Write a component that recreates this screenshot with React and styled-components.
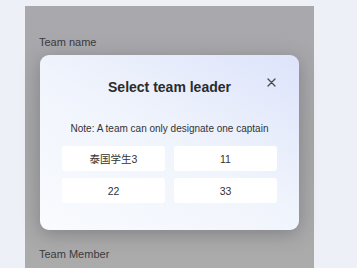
import React from "react"
import styled, { createGlobalStyle } from "styled-components"

const GlobalStyle = createGlobalStyle`
  html, body {
    margin: 0;
    padding: 0;
    height: 100%;
    background: #edf0f7;
    font-family: "Liberation Sans", Arial, "Noto Sans CJK SC", sans-serif;
  }
  #root {
    height: 100%;
  }
`

const members = ["泰国学生3", "11", "22", "33"]

export default function App() {
    return (
        <>
            <GlobalStyle />
            <Page>
                <Panel>
                    <Label>Team name</Label>
                    <Spacer />
                    <Label>Team Member</Label>
                    <Modal>
                        <Close aria-label="close">
                            <svg width="9" height="9" viewBox="0 0 9 9">
                                <path d="M1 1L8 8M8 1L1 8" stroke="#4a4a4a" strokeWidth="1.3" strokeLinecap="round" />
                            </svg>
                        </Close>
                        <Title>Select team leader</Title>
                        <Note>Note: A team can only designate one captain</Note>
                        <Grid>
                            {members.map((m) => (
                                <Member key={m}>{m}</Member>
                            ))}
                        </Grid>
                    </Modal>
                </Panel>
            </Page>
        </>
    )
}

const Page = styled.div`
    height: 100%;
    box-sizing: border-box;
    padding: 6px 0 0 25px;
`

const Panel = styled.div`
    position: relative;
    width: 289px;
    height: 100%;
    box-sizing: border-box;
    padding: 30px 0 0 14px;
    display: flex;
    flex-direction: column;
    background: linear-gradient(180deg, #a9a8ad 0%, #a6a6a8 50%, #ababab 100%);
`

const Label = styled.div`
    font-size: 11px;
    line-height: 13px;
    color: #3a3a3e;
`

const Spacer = styled.div`
    height: 199px;
`

const Modal = styled.div`
    position: absolute;
    left: 15px;
    top: 49px;
    width: 259px;
    height: 175px;
    box-sizing: border-box;
    padding: 22px 22px 0 22px;
    display: flex;
    flex-direction: column;
    align-items: center;
    border-radius: 9px;
    background: linear-gradient(30deg, #f9fbfe 0%, #f0f4fc 50%, #dde4fb 100%);
    box-shadow: 0 4px 18px rgba(60, 60, 70, 0.35);
`

const Close = styled.div`
    position: absolute;
    top: 23px;
    right: 23px;
    width: 9px;
    height: 9px;
    display: flex;
`

const Title = styled.h2`
    margin: 0;
    font-size: 14px;
    line-height: 20px;
    font-weight: 700;
    color: #2b2b2b;
`

const Note = styled.p`
    margin: 25px 0 0 0;
    font-size: 10px;
    line-height: 14px;
    color: #333333;
`

const Grid = styled.div`
    margin-top: 10px;
    width: 100%;
    display: grid;
    grid-template-columns: 1fr 1fr;
    column-gap: 9px;
    row-gap: 7px;
`

const Member = styled.div`
    height: 25px;
    display: flex;
    align-items: center;
    justify-content: center;
    border-radius: 3px;
    background: #ffffff;
    font-size: 10.5px;
    color: #333333;
`
